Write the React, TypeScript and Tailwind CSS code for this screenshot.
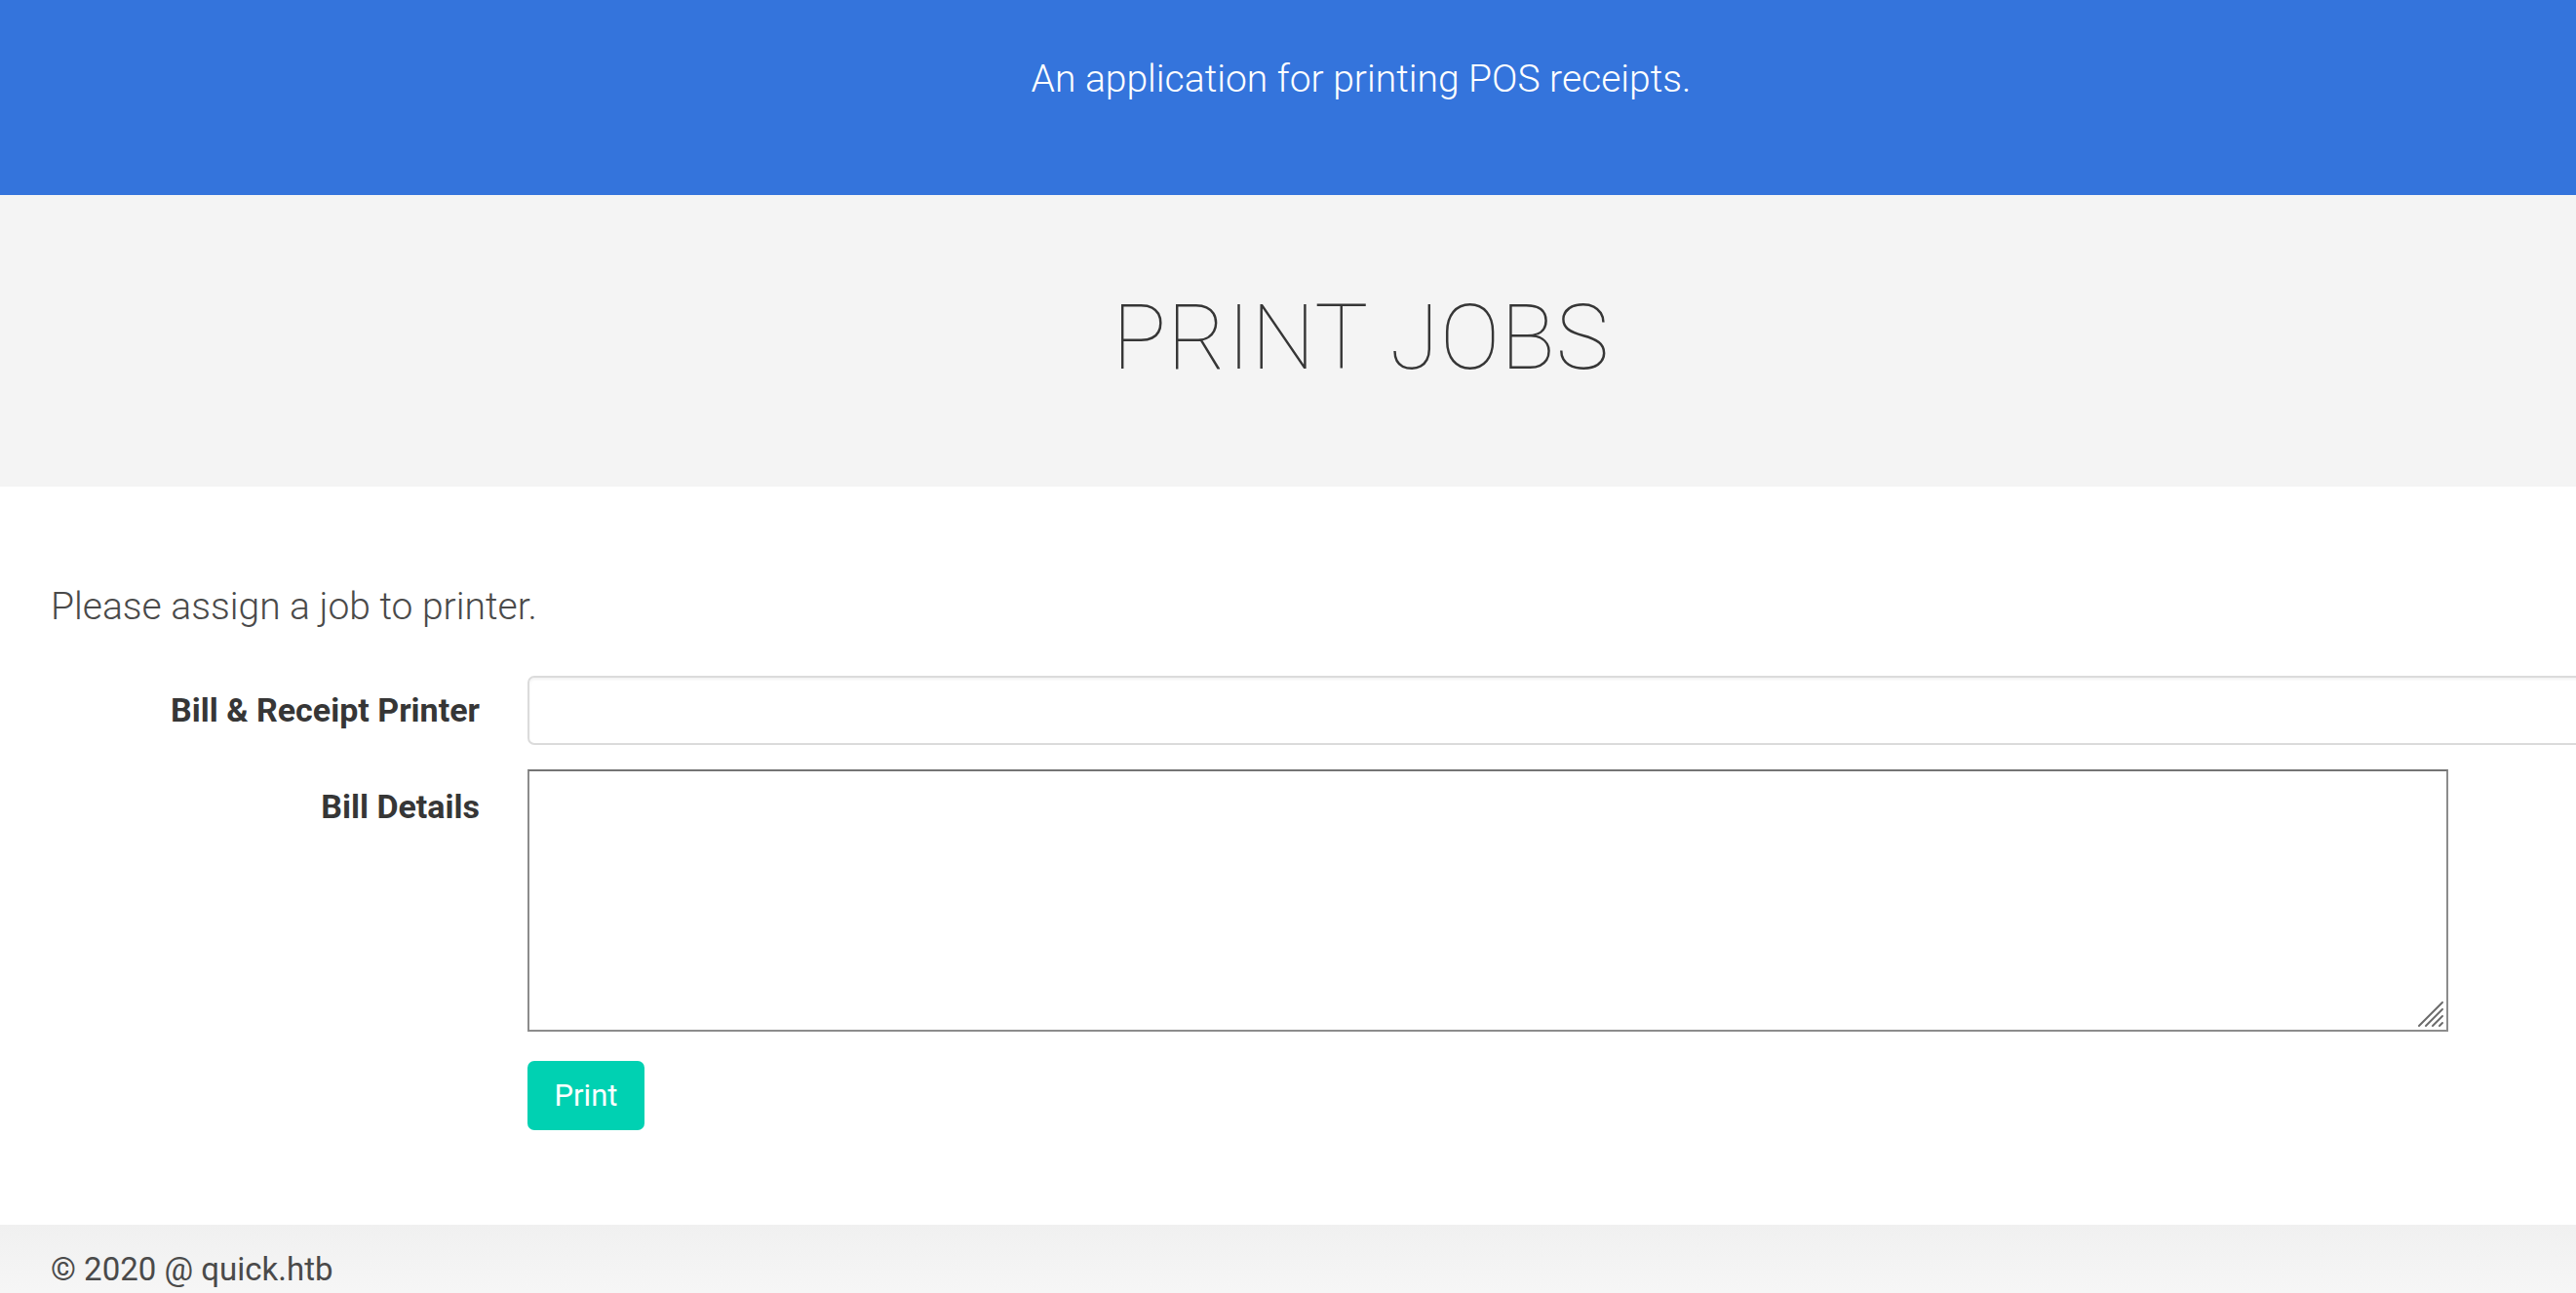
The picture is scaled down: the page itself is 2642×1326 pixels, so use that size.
import { useState } from 'react'

const fontStack = "font-['Roboto','Liberation_Sans',sans-serif]"

const ResizeGrip = () => (
    <svg
        className="pointer-events-none absolute bottom-[4px] right-[4px]"
        width="28"
        height="28"
        viewBox="0 0 28 28"
    >
        <g stroke="#6b6b6b" strokeWidth="2" strokeLinecap="round">
            <line x1="2" y1="26" x2="26" y2="2" />
            <line x1="9" y1="26" x2="26" y2="9" />
            <line x1="16" y1="26" x2="26" y2="16" />
            <line x1="23" y1="26" x2="26" y2="23" />
        </g>
    </svg>
)

export default function App() {
    const [printer, setPrinter] = useState('')
    const [details, setDetails] = useState('')

    return (
        <div className="min-h-[1326px] w-full overflow-hidden bg-white">
            <div className={`w-[2792px] ${fontStack}`}>
                <header className="h-[200px] bg-[#3474dc] pt-[52px] text-center">
                    <p className="text-[39px] font-light leading-[1.5] text-white">
                        An application for printing POS receipts.
                    </p>
                </header>

                <section className="h-[299px] bg-[#f4f4f4] pt-[101px] text-center">
                    <h1 className="text-[92px] font-thin leading-none tracking-[1px] text-[#363636]">
                        PRINT JOBS
                    </h1>
                </section>

                <main className="px-[52px] pt-[99px] pb-[97px]">
                    <p className="mb-[46px] text-[39px] font-light leading-[1.25] text-[#4a4a4a]">
                        Please assign a job to printer.
                    </p>

                    <form
                        onSubmit={(e) => e.preventDefault()}
                        className="flex flex-col gap-[25px]"
                    >
                        <div className="flex items-center">
                            <label className="w-[440px] shrink-0 text-right text-[34px] font-bold leading-[1.5] text-[#363636]">
                                Bill &amp; Receipt Printer
                            </label>
                            <input
                                type="text"
                                value={printer}
                                onChange={(e) => setPrinter(e.target.value)}
                                className="ml-[49px] h-[71px] min-w-0 flex-1 rounded-[7px] border-2 border-[#dbdbdb] bg-white px-4 text-[27px] text-[#363636] shadow-[inset_0_2px_3px_rgba(10,10,10,0.05)] outline-none"
                            />
                        </div>

                        <div className="flex items-start">
                            <label className="w-[440px] shrink-0 pt-[13px] text-right text-[34px] font-bold leading-[1.5] text-[#363636]">
                                Bill Details
                            </label>
                            <div className="relative ml-[49px]">
                                <textarea
                                    value={details}
                                    onChange={(e) => setDetails(e.target.value)}
                                    className="block h-[269px] w-[1970px] resize-none border-2 border-[#8c8c8c] border-t-[#747474] bg-white p-2 text-[27px] outline-none"
                                />
                                <ResizeGrip />
                            </div>
                        </div>

                        <div className="ml-[489px] pt-[5px]">
                            <button
                                type="submit"
                                className="h-[71px] w-[120px] rounded-[7px] bg-[#00d1b2] text-[31px] leading-none text-white"
                            >
                                Print
                            </button>
                        </div>
                    </form>
                </main>

                <footer className="h-[80px] bg-gradient-to-b from-[#f0f0f0] to-[#f7f7f7] px-[52px] pt-[26px]">
                    <p className="text-[33px] leading-[1.2] text-[#4a4a4a]">
                        © 2020 @ quick.htb
                    </p>
                </footer>
            </div>
        </div>
    )
}
